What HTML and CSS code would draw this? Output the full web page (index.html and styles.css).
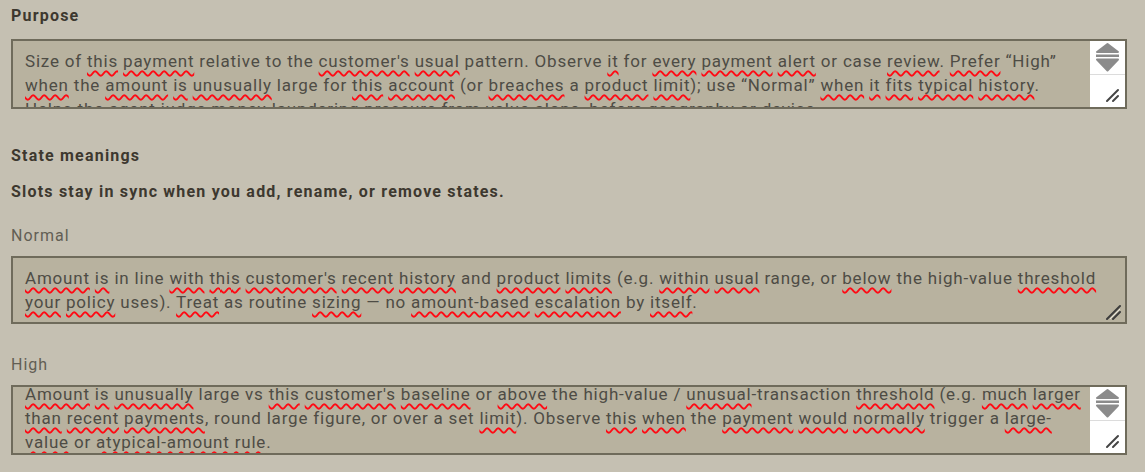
FILE: index.html
```html
<!DOCTYPE html>
<html lang="en">
<head>
<meta charset="utf-8">
<title>State meanings</title>
<link rel="stylesheet" href="styles.css">
</head>
<body>
<div class="page">
  <div class="heading heading-purpose">Purpose</div>
  <div class="field field-tall">
    <div class="field-text">
      <span class="line">Size of <span class="sp">this</span> <span class="sp">payment</span> relative to the <span class="sp">customer's</span> <span class="sp">usual</span> pattern. Observe <span class="sp">it</span> for <span class="sp">every</span> <span class="sp">payment</span> <span class="sp">alert</span> or case <span class="sp">review</span>. <span class="sp">Prefer</span> “High”</span>
      <span class="line"><span class="sp">when</span> the <span class="sp">amount</span> <span class="sp">is</span> <span class="sp">unusually</span> large for <span class="sp">this</span> <span class="sp">account</span> (or <span class="sp">breaches</span> a <span class="sp">product</span> <span class="sp">limit</span>); use “Normal” <span class="sp">when</span> <span class="sp">it</span> <span class="sp">fits</span> <span class="sp">typical</span> <span class="sp">history</span>.</span>
      <span class="line">Helps the agent judge money-laundering pressure from value alone, before geography or device.</span>
    </div>
    <div class="scrollbar">
      <div class="scroll-arrows">
        <svg width="35" height="33" viewBox="0 0 35 33">
          <polygon points="17.5,3 28,11 7,11" fill="#8b8b8b" stroke="#8b8b8b" stroke-width="2" stroke-linejoin="round"/>
          <rect x="6" y="13.5" width="23" height="2.5" fill="#8b8b8b"/>
          <polygon points="7,18.5 28,18.5 17.5,29.5" fill="#8b8b8b" stroke="#8b8b8b" stroke-width="2" stroke-linejoin="round"/>
        </svg>
      </div>
      <div class="scroll-corner">
        <svg class="grip" width="16" height="16" viewBox="0 0 16 16">
          <line x1="2" y1="14" x2="13" y2="3" stroke="#444" stroke-width="2" stroke-linecap="round"/>
          <line x1="8" y1="14" x2="13" y2="9" stroke="#444" stroke-width="2" stroke-linecap="round"/>
        </svg>
      </div>
    </div>
  </div>

  <div class="heading heading-states">State meanings</div>
  <div class="heading heading-note">Slots stay in sync when you add, rename, or remove states.</div>

  <div class="state-label state-label-first">Normal</div>
  <div class="field field-short">
    <div class="field-text">
      <span class="line"><span class="sp">Amount</span> <span class="sp">is</span> in line <span class="sp">with</span> <span class="sp">this</span> <span class="sp">customer's</span> <span class="sp">recent</span> <span class="sp">history</span> and <span class="sp">product</span> <span class="sp">limits</span> (e.g. <span class="sp">within</span> <span class="sp">usual</span> range, or <span class="sp">below</span> the high-value <span class="sp">threshold</span></span>
      <span class="line"><span class="sp">your</span> <span class="sp">policy</span> uses). <span class="sp">Treat</span> as routine <span class="sp">sizing</span> — no <span class="sp">amount-based</span> <span class="sp">escalation</span> by <span class="sp">itself</span>.</span>
    </div>
    <svg class="grip grip-overlay" width="16" height="16" viewBox="0 0 16 16">
      <line x1="1" y1="15" x2="14" y2="2" stroke="#3c3c3c" stroke-width="2" stroke-linecap="round"/>
      <line x1="7" y1="15" x2="14" y2="8" stroke="#3c3c3c" stroke-width="2" stroke-linecap="round"/>
      <line x1="4" y1="15" x2="14" y2="5" stroke="#e8e6de" stroke-width="1"/>
    </svg>
  </div>

  <div class="state-label">High</div>
  <div class="field field-tall">
    <div class="field-text field-text-scrolled">
      <span class="line"><span class="sp">Amount</span> <span class="sp">is</span> <span class="sp">unusually</span> large vs <span class="sp">this</span> <span class="sp">customer's</span> <span class="sp">baseline</span> or <span class="sp">above</span> the high-value / <span class="sp">unusual</span>-transaction <span class="sp">threshold</span> (e.g. <span class="sp">much</span> <span class="sp">larger</span></span>
      <span class="line"><span class="sp">than</span> <span class="sp">recent</span> <span class="sp">payments</span>, round large figure, or over a set <span class="sp">limit</span>). Observe <span class="sp">this</span> <span class="sp">when</span> the <span class="sp">payment</span> <span class="sp">would</span> <span class="sp">normally</span> trigger a <span class="sp">large-</span></span>
      <span class="line"><span class="sp">value</span> or <span class="sp">atypical-amount rule</span>.</span>
    </div>
    <div class="scrollbar">
      <div class="scroll-arrows">
        <svg width="35" height="33" viewBox="0 0 35 33">
          <polygon points="17.5,3 28,11 7,11" fill="#8b8b8b" stroke="#8b8b8b" stroke-width="2" stroke-linejoin="round"/>
          <rect x="6" y="13.5" width="23" height="2.5" fill="#8b8b8b"/>
          <polygon points="7,18.5 28,18.5 17.5,29.5" fill="#8b8b8b" stroke="#8b8b8b" stroke-width="2" stroke-linejoin="round"/>
        </svg>
      </div>
      <div class="scroll-corner">
        <svg class="grip" width="16" height="16" viewBox="0 0 16 16">
          <line x1="2" y1="14" x2="13" y2="3" stroke="#444" stroke-width="2" stroke-linecap="round"/>
          <line x1="8" y1="14" x2="13" y2="9" stroke="#444" stroke-width="2" stroke-linecap="round"/>
        </svg>
      </div>
    </div>
  </div>
</div>
</body>
</html>
```

FILE: styles.css
```css
html, body {
  margin: 0;
  padding: 0;
  background: #c5c0b2;
}

.page {
  padding: 6px 18px 0 11px;
  font-family: Roboto, "Liberation Sans", sans-serif;
}

.heading {
  font-size: 16px;
  line-height: 20px;
  font-weight: 700;
  letter-spacing: 1.2px;
  color: #3d382f;
}

.heading-purpose {
  margin-bottom: 13px;
}

.heading-states {
  margin-top: 37px;
}

.heading-note {
  margin-top: 16px;
}

.state-label {
  margin-top: 31px;
  margin-bottom: 10px;
  font-size: 16px;
  line-height: 20px;
  letter-spacing: 1px;
  color: #625e54;
}

.state-label-first {
  margin-top: 24px;
}

.field {
  position: relative;
  display: flex;
  width: 1116px;
  box-sizing: border-box;
  border: 2px solid #6f6b5b;
  background: #b8b29f;
  overflow: hidden;
}

.field-tall {
  height: 70px;
}

.field-short {
  height: 68px;
}

.field-text {
  flex: 1;
  min-width: 0;
  padding: 8px 0 0 12px;
  font-size: 17px;
  line-height: 24px;
  letter-spacing: 0.8px;
  color: #4e4c45;
  overflow: hidden;
}

.field-text-scrolled {
  padding-top: 0;
  margin-top: -5px;
}

.line {
  display: block;
  white-space: nowrap;
}

.sp {
  text-decoration-line: underline;
  text-decoration-style: wavy;
  text-decoration-color: #ff0a14;
  text-decoration-thickness: 2px;
  text-underline-offset: 3px;
  text-decoration-skip-ink: none;
}

.scrollbar {
  width: 35px;
  flex: 0 0 35px;
  display: flex;
  flex-direction: column;
  background: #ffffff;
  margin-top: -1px;
}

.scroll-arrows {
  height: 33px;
  border-bottom: 1px solid #dcdcdc;
  margin-top: 1px;
}

.scroll-arrows svg {
  display: block;
}

.scroll-corner {
  flex: 1;
  display: flex;
  justify-content: flex-end;
  align-items: flex-end;
  padding: 0 4px 4px 0;
}

.grip {
  display: block;
}

.grip-overlay {
  position: absolute;
  right: 3px;
  bottom: 2px;
}
```
